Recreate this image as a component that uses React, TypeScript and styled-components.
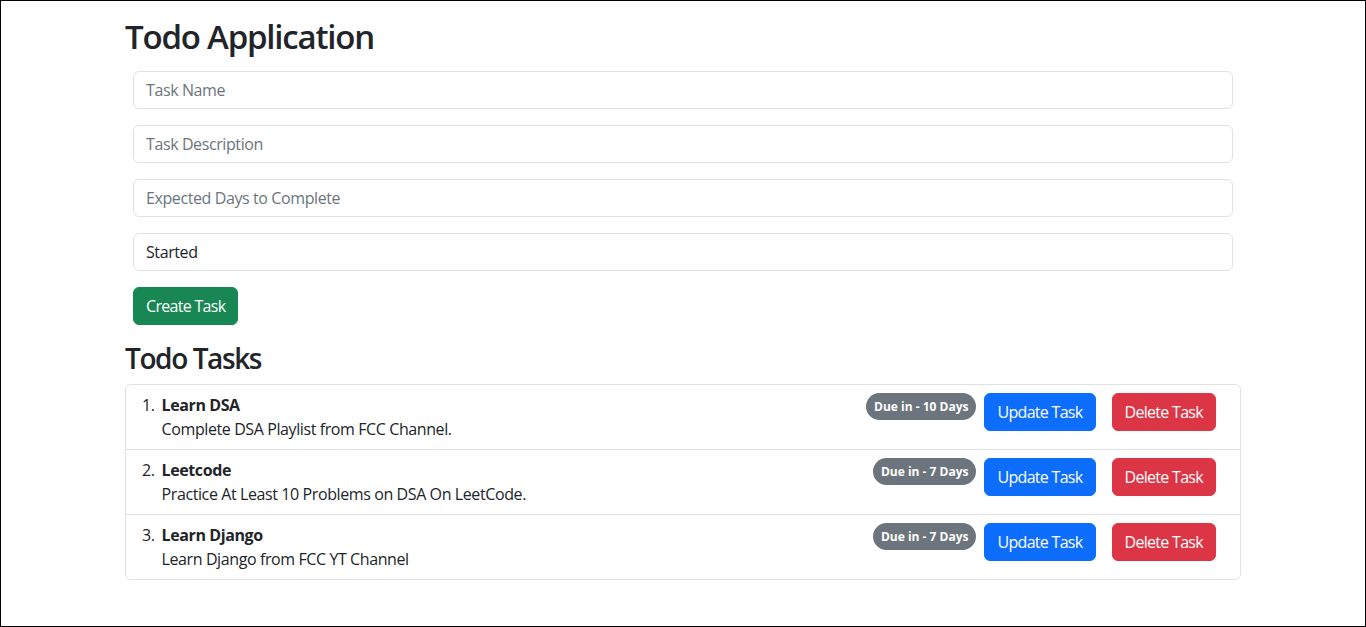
import React from 'react';
import styled, { createGlobalStyle } from 'styled-components';

type Task = {
  name: string;
  description: string;
  days: number;
};

const tasks: Task[] = [
  { name: 'Learn DSA', description: 'Complete DSA Playlist from FCC Channel.', days: 10 },
  { name: 'Leetcode', description: 'Practice At Least 10 Problems on DSA On LeetCode.', days: 7 },
  { name: 'Learn Django', description: 'Learn Django from FCC YT Channel', days: 7 },
];

const GlobalStyle = createGlobalStyle`
  *, *::before, *::after {
    box-sizing: border-box;
  }
  html, body {
    margin: 0;
    padding: 0;
  }
  body {
    font-family: 'Open Sans', 'Segoe UI', sans-serif;
    font-size: 16px;
    line-height: 1.5;
    color: #212529;
    background: #fff;
    letter-spacing: -0.4px;
  }
`;

const Frame = styled.div`
  min-height: 100vh;
  border: 1px solid #000;
`;

const Container = styled.div`
  max-width: 1140px;
  margin: 0 auto;
  padding: 16px 12px 0;
`;

const Title = styled.h1`
  margin: 1px 0 7px;
  font-size: 33px;
  font-weight: 600;
  line-height: 38px;
  letter-spacing: -1.2px;
`;

const Form = styled.form`
  display: flex;
  flex-direction: column;
  gap: 16px;
  padding: 8px;
`;

const Input = styled.input`
  display: block;
  width: 100%;
  height: 38px;
  padding: 6px 12px;
  font: inherit;
  letter-spacing: inherit;
  color: #212529;
  background: #fff;
  border: 1px solid #dee2e6;
  border-radius: 6px;
  outline: none;

  &::placeholder {
    color: #6c757d;
    opacity: 1;
  }
`;

const colors = {
  success: '#198754',
  primary: '#0d6efd',
  danger: '#dc3545',
};

const Button = styled.button<{ $variant: keyof typeof colors; $spaced?: boolean }>`
  display: inline-block;
  flex: none;
  margin: ${(p) => (p.$spaced ? '0 8px' : '0')};
  padding: 6px 12px;
  font: inherit;
  letter-spacing: -0.7px;
  line-height: 24px;
  color: #fff;
  background: ${(p) => colors[p.$variant]};
  border: 1px solid ${(p) => colors[p.$variant]};
  border-radius: 6px;
  cursor: pointer;
`;

const CreateButton = styled(Button)`
  align-self: flex-start;
`;

const SectionTitle = styled.h2`
  margin: 7px 0 8px;
  font-size: 28px;
  font-weight: 600;
  line-height: 36px;
  letter-spacing: -1.4px;
`;

const TaskList = styled.ol`
  margin: 0;
  padding: 0;
  list-style: none;
  border: 1px solid #dee2e6;
  border-radius: 6px;
  counter-reset: task;
`;

const TaskItem = styled.li`
  display: flex;
  justify-content: space-between;
  align-items: flex-start;
  padding: 8px 16px;
  counter-increment: task;

  & + & {
    border-top: 1px solid #dee2e6;
  }

  &::before {
    content: counter(task) '.';
  }
`;

const TaskBody = styled.div`
  margin-left: 7px;
  margin-right: auto;
`;

const TaskName = styled.div`
  font-weight: 700;
`;

const Actions = styled.div`
  display: flex;
  align-items: flex-start;
`;

const Badge = styled.span`
  display: inline-block;
  padding: 7px 8px;
  font-size: 12px;
  font-weight: 700;
  line-height: 13px;
  letter-spacing: 0;
  color: #fff;
  background: #6c757d;
  border-radius: 50rem;
  white-space: nowrap;
`;

export default function App() {
  return (
    <Frame>
      <GlobalStyle />
      <Container>
        <Title>Todo Application</Title>
        <Form onSubmit={(e) => e.preventDefault()}>
          <Input placeholder='Task Name' />
          <Input placeholder='Task Description' />
          <Input placeholder='Expected Days to Complete' />
          <Input defaultValue='Started' />
          <CreateButton type='submit' $variant='success'>
            Create Task
          </CreateButton>
        </Form>
        <SectionTitle>Todo Tasks</SectionTitle>
        <TaskList>
          {tasks.map((task, index) => (
            <TaskItem key={index}>
              <TaskBody>
                <TaskName>{task.name}</TaskName>
                {task.description}
              </TaskBody>
              <Actions>
                <Badge>Due in - {task.days} Days</Badge>
                <Button $variant='primary' $spaced>
                  Update Task
                </Button>
                <Button $variant='danger' $spaced>
                  Delete Task
                </Button>
              </Actions>
            </TaskItem>
          ))}
        </TaskList>
      </Container>
    </Frame>
  );
}
